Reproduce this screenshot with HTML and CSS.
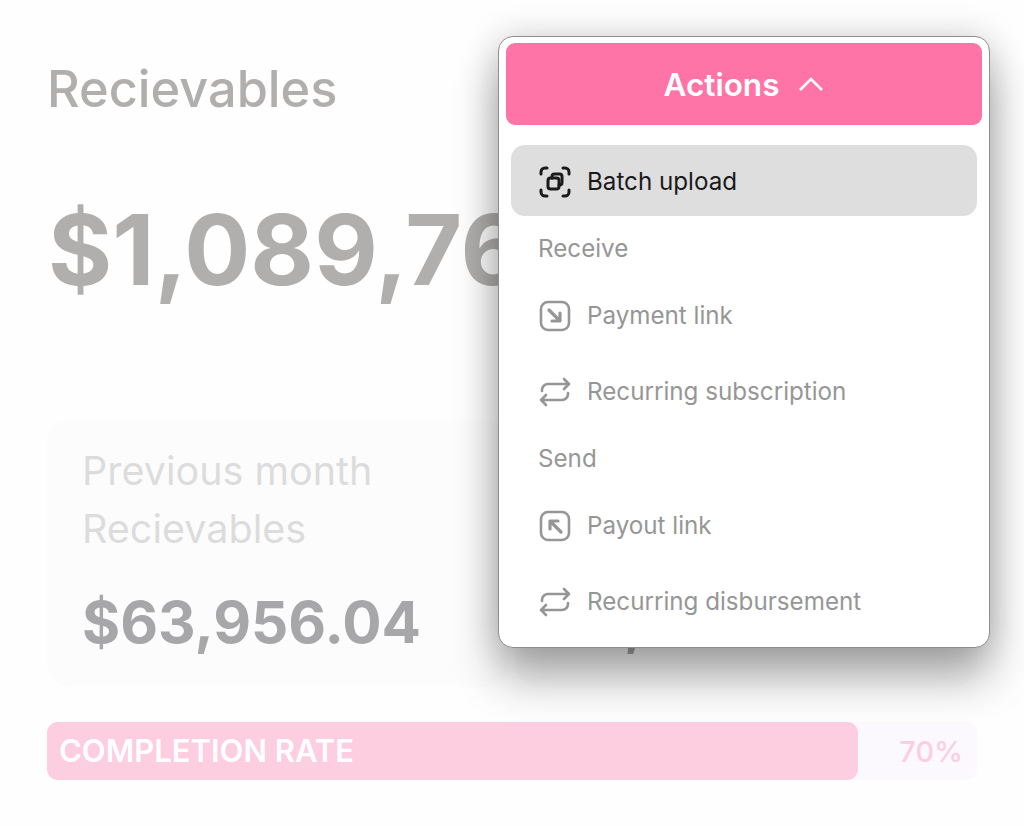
FILE: index.html
```html
<!DOCTYPE html>
<html lang="en">
<head>
  <meta charset="UTF-8">
  <title>Recievables</title>
  <link rel="stylesheet" href="styles.css">
</head>
<body>
  <main class="page">
    <h1 class="title">Recievables</h1>
    <div class="total">$1,089,764.20</div>

    <div class="cards">
      <div class="card">
        <div class="card-label">Previous month<br>Recievables</div>
        <div class="card-value">$63,956.04</div>
      </div>
      <div class="card card-covered">
        <div class="card-value">£8,240.50</div>
      </div>
    </div>

    <div class="progress">
      <div class="progress-fill">COMPLETION RATE</div>
      <div class="progress-num">70%</div>
    </div>
  </main>

  <div class="menu">
    <button class="menu-head">
      Actions
      <svg class="chevron" viewBox="0 0 26 16"><path d="M2 14 13 3l11 11"/></svg>
    </button>

    <div class="menu-item active">
      <svg class="icon" viewBox="0 0 32 32">
        <path d="M8 2H6a4 4 0 0 0-4 4v2M24 2h2a4 4 0 0 1 4 4v2M8 30H6a4 4 0 0 1-4-4v-2M24 30h2a4 4 0 0 0 4-4v-2"/>
        <rect x="9" y="12" width="11" height="11" rx="2.5"/>
        <path d="M13 12v-1.500A2.500 2.500 0 0 1 15.500 8h5A2.500 2.500 0 0 1 23 10.500v6a2.500 2.500 0 0 1-2.500 2.500H20"/>
      </svg>
      Batch upload
    </div>

    <div class="menu-section">Receive</div>
    <div class="menu-item">
      <svg class="icon" viewBox="0 0 32 32">
        <rect x="2" y="2" width="28" height="28" rx="7"/>
        <path class="arrow" d="M10 10 20 20M21 13v8h-8"/>
      </svg>
      Payment link
    </div>
    <div class="menu-item">
      <svg class="icon" viewBox="0 0 32 32">
        <path d="M3 15v-1a6 6 0 0 1 6-6h20M25 3l5 5-5 5M29 17v1a6 6 0 0 1-6 6H3M7 19l-5 5 5 5"/>
      </svg>
      Recurring subscription
    </div>

    <div class="menu-section">Send</div>
    <div class="menu-item">
      <svg class="icon" viewBox="0 0 32 32">
        <rect x="2" y="2" width="28" height="28" rx="7"/>
        <path class="arrow" d="M22 22 12 12M11 19v-8h8"/>
      </svg>
      Payout link
    </div>
    <div class="menu-item">
      <svg class="icon" viewBox="0 0 32 32">
        <path d="M3 15v-1a6 6 0 0 1 6-6h20M25 3l5 5-5 5M29 17v1a6 6 0 0 1-6 6H3M7 19l-5 5 5 5"/>
      </svg>
      Recurring disbursement
    </div>
  </div>
</body>
</html>
```

FILE: styles.css
```css
html, body { margin: 0; height: 100%; }
body { background: #fefefe; font-family: Inter, "Liberation Sans", sans-serif; overflow: hidden; }

.page { width: 930px; padding: 58px 0 0 47px; }
.title { margin: 0; font-size: 50.500px; line-height: 62px; font-weight: 500; color: #b0afad; }
.total { margin: 70px 0 0 1px; font-size: 98px; line-height: 120px; font-weight: 700; color: #b0afad; white-space: nowrap; }

.cards { display: grid; grid-template-columns: 1fr 1fr; gap: 6px; margin-top: 110px; }
.card { padding: 22px 35px 0; background: #fcfcfc; border-radius: 24px; height: 267px; box-sizing: border-box; }
.card-covered { padding-top: 138px; }
.card-label { font-size: 39.500px; line-height: 58px; color: #dcdcdc; white-space: nowrap; }
.card-value { margin-top: 28px; font-size: 58.300px; line-height: 72px; font-weight: 700; color: #a7a7a9; white-space: nowrap; }

.progress { display: flex; align-items: center; height: 58px; margin-top: 35px; background: #fbf9fd; border-radius: 11px; }
.progress-fill { box-sizing: border-box; width: 811px; height: 100%; padding-left: 12px; line-height: 58px; background: #fdcde0; border-radius: 11px; color: #fff; font-size: 31px; font-weight: 600; }
.progress-num { flex: 1; padding-right: 14px; text-align: right; color: #fdcde0; font-size: 29px; font-weight: 500; }

.menu { position: absolute; left: 498px; top: 36px; width: 492px; height: 612px; box-sizing: border-box; padding: 6px 7px; background: #fff; border: 1px solid #8e8e8e; border-radius: 15px; box-shadow: 0 30px 45px rgba(0,0,0,.32), 0 0 35px rgba(0,0,0,.16); }
.menu-head { display: flex; align-items: center; justify-content: center; gap: 19px; width: 100%; height: 82px; background: #ff74a6; border: none; border-radius: 9px; color: #fff; font-family: inherit; font-size: 31.500px; font-weight: 600; }
.chevron { width: 26px; height: 16px; fill: none; stroke: #fff; stroke-width: 2.600; }

.menu-item { display: flex; align-items: center; gap: 16px; box-sizing: border-box; height: 71px; padding: 2px 0 0 28px; margin: 0 5px; font-size: 24.200px; color: #969696; }
.menu-item.active { margin-top: 20px; background: #dedede; border-radius: 14px; color: #1a1a1a; }
.menu-item + .menu-item { margin-top: 5px; }
.menu-section { margin: 18px 0 15px 32px; font-size: 24.200px; line-height: 30px; color: #969696; }

.icon { width: 32px; height: 32px; fill: none; stroke: currentColor; stroke-width: 2.600; stroke-linecap: round; stroke-linejoin: round; }
.icon .arrow { stroke-width: 3.200; }
.active .icon { stroke-width: 3; }
```
